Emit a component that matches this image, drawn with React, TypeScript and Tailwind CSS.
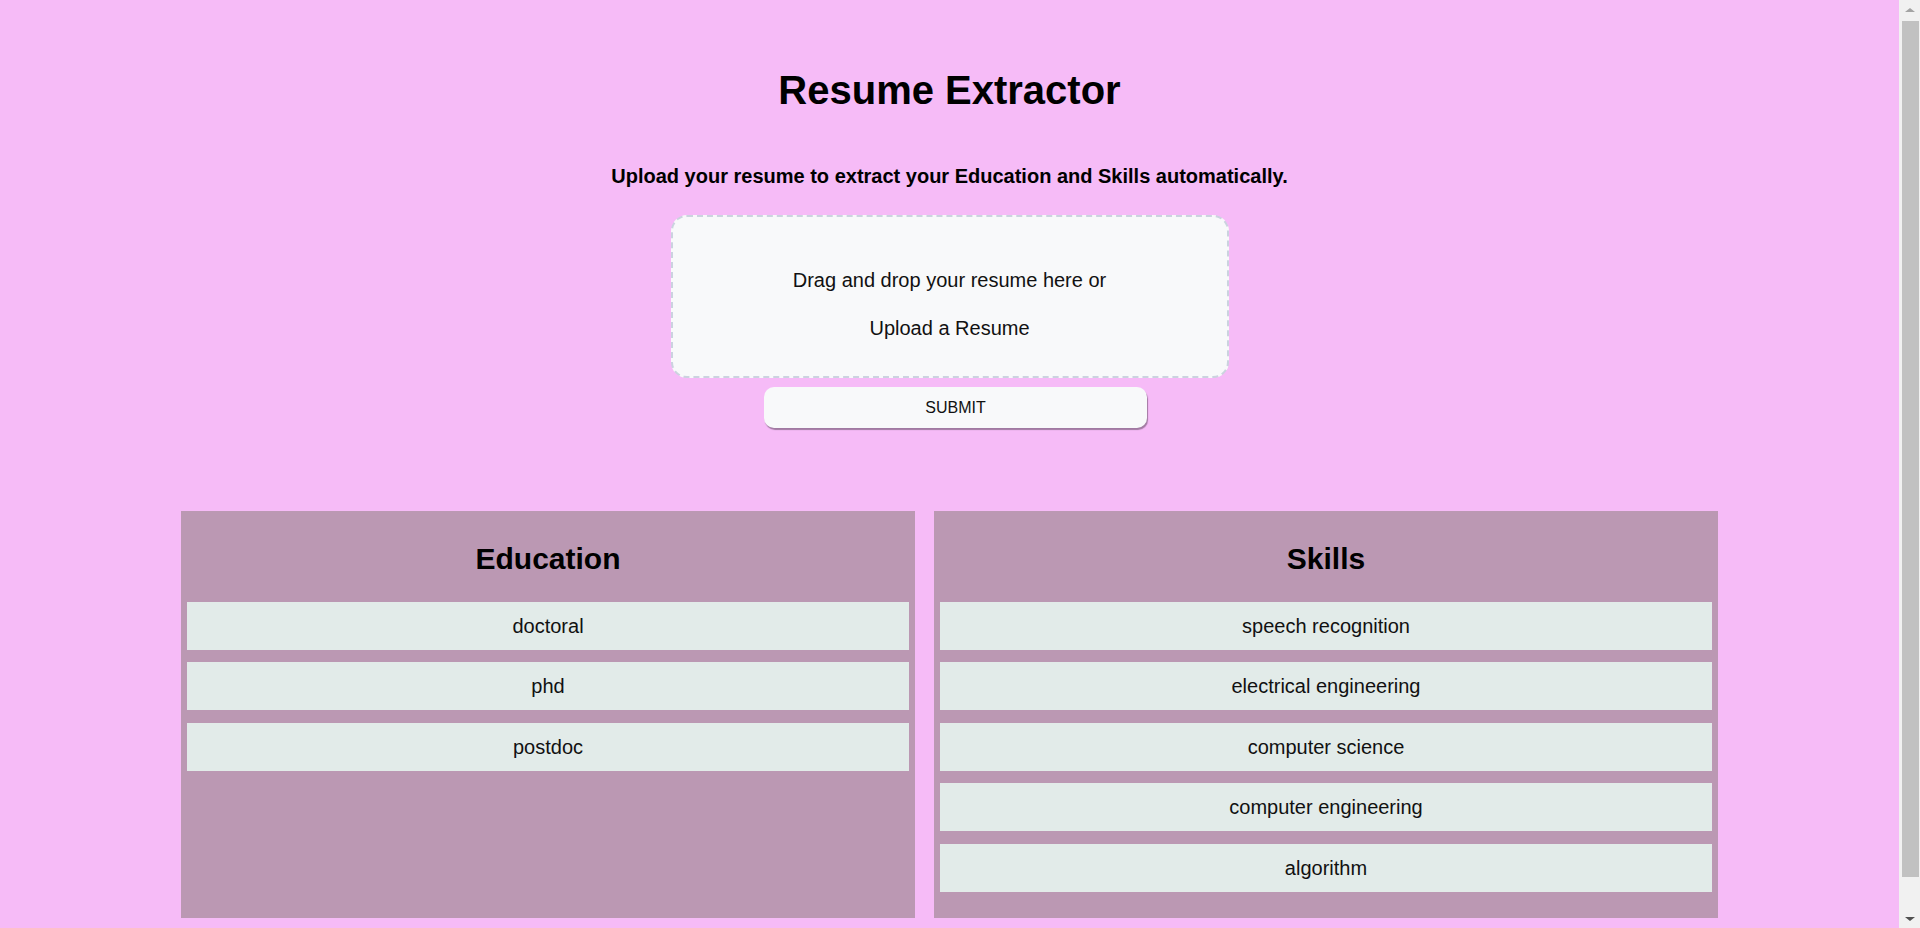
const education = ["doctoral", "phd", "postdoc"];
const skills = [
  "speech recognition",
  "electrical engineering",
  "computer science",
  "computer engineering",
  "algorithm",
];

function Panel({ title, items, width }: { title: string; items: string[]; width: string }) {
  return (
    <div className={`flex flex-col bg-[#bb98b3] px-[6px] pt-[6px] pb-[26px] ${width}`}>
      <h2 className="my-[25px] text-center text-[30px] font-bold leading-[34.5px] text-black">
        {title}
      </h2>
      <div className="flex flex-col gap-[12.5px]">
        {items.map((item) => (
          <div
            key={item}
            className="flex h-12 items-center justify-center bg-[#e2ebe9] text-[20px] text-[#111]"
          >
            {item}
          </div>
        ))}
      </div>
    </div>
  );
}

// the browser's scroll bar as it appears in the screenshot
function ScrollBar() {
  return (
    <div className="flex h-[928px] w-[21px] shrink-0 flex-col items-center bg-[#f1f1f1]">
      <div className="mt-[8px] h-0 w-0 border-x-[5px] border-b-[4px] border-x-transparent border-b-[#a3a3a3]" />
      <div className="mt-[9px] ml-[2px] h-[856px] w-[17px] bg-[#c1c1c1]" />
      <div className="mt-auto mb-[7px] h-0 w-0 border-x-[5px] border-t-[4px] border-x-transparent border-t-[#505050]" />
    </div>
  );
}

export default function App() {
  return (
    <div
      className="flex h-[928px] overflow-hidden bg-[#f6bbf7] text-black"
      style={{ fontFamily: '"Liberation Sans", Arial, sans-serif' }}
    >
      <main className="flex min-w-0 flex-1 flex-col items-center pt-[67px] pb-[40px]">
        <h1 className="shrink-0 text-[40px] font-bold leading-[46px]">Resume Extractor</h1>
        <p className="mt-[52px] shrink-0 text-[20px] font-bold leading-[23px]">
          Upload your resume to extract your Education and Skills automatically.
        </p>

        {/* Drop zone */}
        <div className="mt-[27px] flex h-[163px] w-[558px] shrink-0 flex-col items-center rounded-[16px] border-2 border-dashed border-[#cbd3df] bg-[#f8f9fa] pt-[49px] text-[20px] leading-[28px] text-[#111]">
          <p>Drag and drop your resume here or</p>
          <p className="mt-[20px]">Upload a Resume</p>
        </div>

        <button className="mt-[9px] ml-[12px] h-[41px] w-[383px] shrink-0 rounded-[10px] bg-[#f8f9fa] text-[16px] text-[#111] shadow-[1px_2px_1px_rgba(0,0,0,0.35)]">
          SUBMIT
        </button>

        {/* Results */}
        <div className="mt-[83px] flex shrink-0 gap-[19px]">
          <Panel title="Education" items={education} width="w-[734px]" />
          <Panel title="Skills" items={skills} width="w-[784px]" />
        </div>
      </main>
      <ScrollBar />
    </div>
  );
}
